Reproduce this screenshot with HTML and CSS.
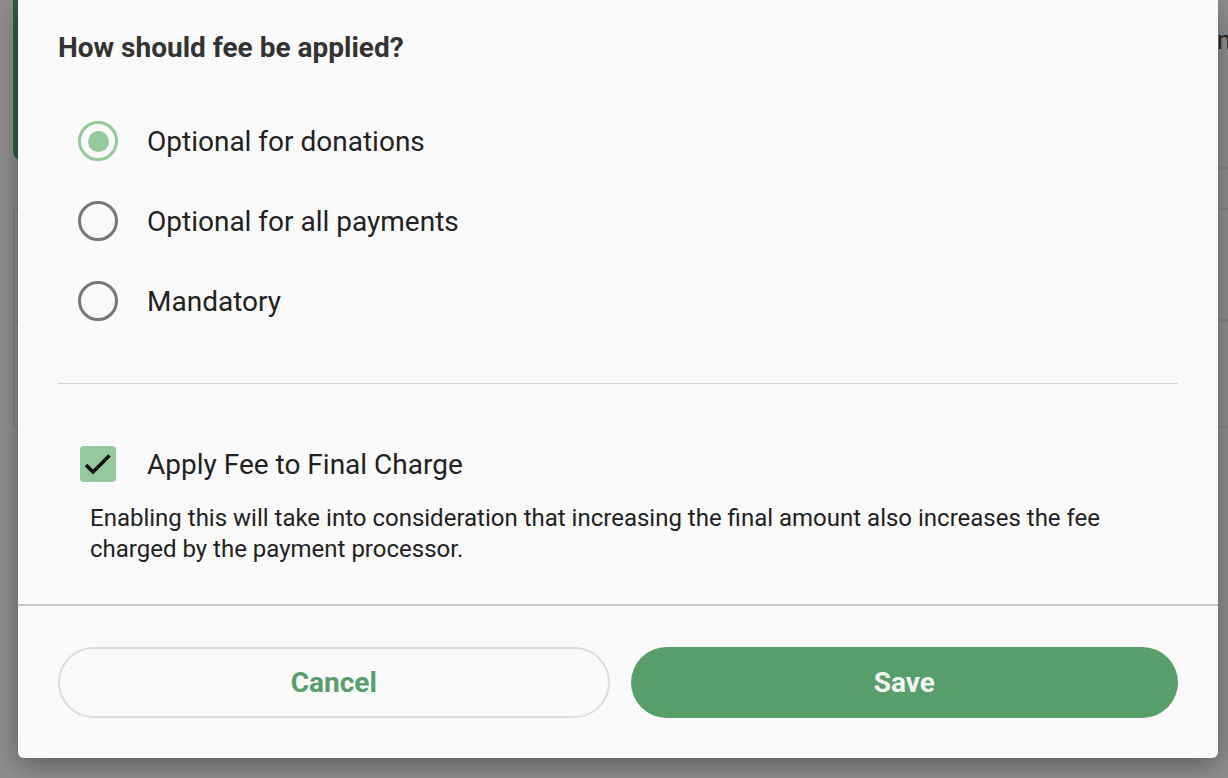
FILE: index.html
```html
<!DOCTYPE html>
<html>
<head>
<meta charset="utf-8">
<link rel="stylesheet" href="styles.css">
</head>
<body>
<div class="page">
  <div class="bg-card-green"></div>
  <div class="bg-row bg-row-1"></div>
  <div class="bg-row bg-row-2"></div>
  <div class="bg-right-line bg-rl-0"></div>
  <div class="bg-right-clip"><span class="bg-right-text">m</span></div>
</div>
<div class="modal">
  <div class="modal-body">
    <h2 class="title">How should fee be applied?</h2>
    <div class="radio-group">
      <label class="radio-row">
        <span class="radio radio-checked"><span class="radio-dot"></span></span>
        <span class="radio-label">Optional for donations</span>
      </label>
      <label class="radio-row">
        <span class="radio"></span>
        <span class="radio-label">Optional for all payments</span>
      </label>
      <label class="radio-row">
        <span class="radio"></span>
        <span class="radio-label">Mandatory</span>
      </label>
    </div>
    <div class="divider"></div>
    <label class="check-row">
      <span class="checkbox">
        <svg width="36" height="36" viewBox="0 0 36 36"><path d="M6 19 L13 26 L29.5 9.5" fill="none" stroke="#111" stroke-width="3.6" stroke-linecap="butt" stroke-linejoin="miter"/></svg>
      </span>
      <span class="check-label">Apply Fee to Final Charge</span>
    </label>
    <p class="desc">Enabling this will take into consideration that increasing the final amount also increases the fee charged by the payment processor.</p>
  </div>
  <div class="modal-footer">
    <button class="btn btn-cancel">Cancel</button>
    <button class="btn btn-save">Save</button>
  </div>
</div>
</body>
</html>
```
FILE: styles.css
```css
html, body {
  margin: 0;
  padding: 0;
}
body {
  width: 1228px;
  height: 778px;
  overflow: hidden;
  background: #8f8f8f;
  font-family: Roboto, "Liberation Sans", sans-serif;
  position: relative;
}
.page {
  position: absolute;
  inset: 0;
}
.bg-card-green {
  position: absolute;
  left: 13px;
  top: -20px;
  width: 300px;
  height: 180px;
  border: 5px solid #2f5e3d;
  border-radius: 8px;
  box-sizing: border-box;
}
.bg-row {
  position: absolute;
  left: 13px;
  width: 1220px;
  border: 2px solid #848484;
  box-sizing: border-box;
}
.bg-row-1 {
  top: 208px;
  height: 113px;
}
.bg-row-2 {
  top: 320px;
  height: 108px;
}
.bg-right-line {
  position: absolute;
  left: 1218px;
  width: 20px;
  height: 2px;
  background: #848484;
}
.bg-rl-0 {
  top: 167px;
}
.bg-right-clip {
  position: absolute;
  left: 1210px;
  top: 20px;
  width: 18px;
  height: 40px;
  overflow: hidden;
}
.bg-right-text {
  display: block;
  margin-left: 7px;
  font-size: 26px;
  line-height: 40px;
  color: #2a2a2a;
}
.modal {
  position: absolute;
  left: 18px;
  top: 0;
  width: 1200px;
  height: 758px;
  background: #fafafa;
  border-radius: 0 0 6px 6px;
  box-shadow: 0 8px 28px rgba(0, 0, 0, 0.35);
  display: flex;
  flex-direction: column;
}
.modal-body {
  padding: 31px 40px 0 40px;
  flex: 1;
}
.title {
  margin: 0;
  font-size: 28px;
  line-height: 34px;
  font-weight: 700;
  color: #333333;
}
.radio-group {
  margin-top: 36px;
  display: flex;
  flex-direction: column;
}
.radio-row {
  height: 80px;
  display: flex;
  align-items: center;
  padding-left: 20px;
}
.radio {
  width: 40px;
  height: 40px;
  box-sizing: border-box;
  border: 3.5px solid #777777;
  border-radius: 50%;
  display: flex;
  align-items: center;
  justify-content: center;
  flex-shrink: 0;
}
.radio-checked {
  border-color: #93c99b;
}
.radio-dot {
  width: 21px;
  height: 21px;
  border-radius: 50%;
  background: #93c99b;
}
.radio-label, .check-label {
  margin-left: 29px;
  font-size: 28px;
  color: #222222;
}
.divider {
  margin-top: 42px;
  height: 1px;
  background: #d6d6d6;
}
.check-row {
  margin-top: 62px;
  display: flex;
  align-items: center;
  padding-left: 22px;
  height: 36px;
}
.checkbox {
  width: 36px;
  height: 36px;
  border-radius: 4px;
  background: #93c99b;
  display: block;
  flex-shrink: 0;
}
.checkbox svg {
  display: block;
}
.check-label {
  margin-left: 31px;
}
.desc {
  margin: 21px 40px 0 32px;
  font-size: 24px;
  line-height: 31px;
  color: #222222;
}
.modal-footer {
  border-top: 2px solid #c8c8c8;
  padding: 41px 40px 40px 40px;
  display: flex;
  gap: 21px;
}
.btn {
  flex: 1 1 0;
  width: 0;
  margin: 0;
  padding: 0;
  height: 71px;
  border-radius: 36px;
  font-family: Roboto, "Liberation Sans", sans-serif;
  font-size: 28px;
  font-weight: 700;
  cursor: pointer;
  box-sizing: border-box;
}
.btn-cancel {
  background: #fafafa;
  border: 2px solid #dddddd;
  color: #579e6b;
}
.btn-save {
  background: #579e6b;
  border: none;
  color: #f3f7f3;
}
```
